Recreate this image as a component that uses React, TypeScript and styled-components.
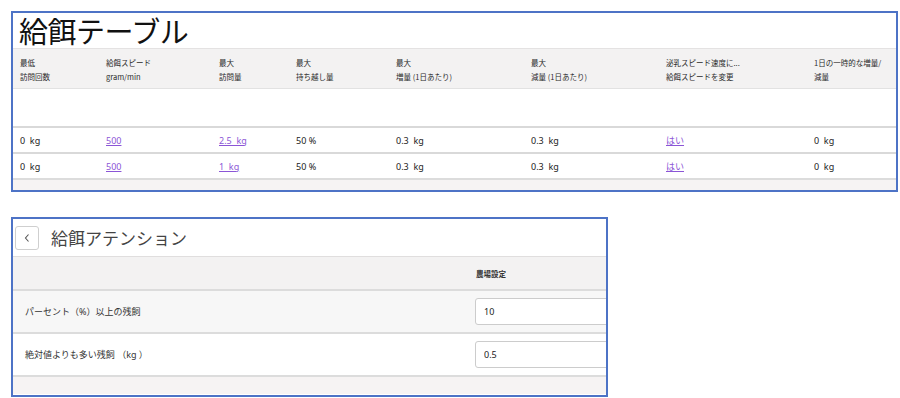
import styled, { createGlobalStyle } from 'styled-components';

const GlobalStyle = createGlobalStyle`
    html, body {
        margin: 0;
        padding: 0;
        background: #ffffff;
    }
    body {
        font-family: 'Noto Sans', 'Noto Sans CJK JP', sans-serif;
        color: #222;
    }
`;

const headers = [
    ['最低', '訪問回数'],
    ['給餌スピード', 'gram/min'],
    ['最大', '訪問量'],
    ['最大', '持ち越し量'],
    ['最大', '増量 (1日あたり)'],
    ['最大', '減量 (1日あたり)'],
    ['泌乳スピード速度に...', '給餌スピードを変更'],
    ['1日の一時的な増量/', '減量']
];

type Cell = { text: string; link?: boolean };

const rows: Cell[][] = [
    [
        { text: '0  kg' },
        { text: '500', link: true },
        { text: '2.5  kg', link: true },
        { text: '50 %' },
        { text: '0.3  kg' },
        { text: '0.3  kg' },
        { text: 'はい', link: true },
        { text: '0  kg' }
    ],
    [
        { text: '0  kg' },
        { text: '500', link: true },
        { text: '1  kg', link: true },
        { text: '50 %' },
        { text: '0.3  kg' },
        { text: '0.3  kg' },
        { text: 'はい', link: true },
        { text: '0  kg' }
    ]
];

const attention = [
    { label: 'パーセント（%）以上の残飼', value: '10', shaded: true },
    { label: '絶対値よりも多い残飼 （kg ）', value: '0.5', shaded: false }
];

const App = () => {
    return (
        <Page>
            <GlobalStyle />
            <TablePanel>
                <TitleArea>
                    <BigTitle>給餌テーブル</BigTitle>
                </TitleArea>
                <HeaderRow>
                    {headers.map(([a, b]) => (
                        <HeadCell key={a + b}>
                            <div>{a}</div>
                            <div>{b}</div>
                        </HeadCell>
                    ))}
                </HeaderRow>
                <EmptyBand />
                {rows.map((row, i) => (
                    <DataRow key={i}>
                        {row.map((cell, j) =>
                            cell.link ? (
                                <LinkCell key={j}>{cell.text}</LinkCell>
                            ) : (
                                <DataCell key={j}>{cell.text}</DataCell>
                            )
                        )}
                    </DataRow>
                ))}
                <Footer $h={10} />
            </TablePanel>

            <AttentionPanel>
                <TitleBar>
                    <BackButton aria-label="戻る">
                        <svg width="8" height="10" viewBox="0 0 8 10">
                            <path
                                d="M5.5 1.5 L2.5 5 L5.5 8.5"
                                fill="none"
                                stroke="#555"
                                strokeWidth="1.1"
                            />
                        </svg>
                    </BackButton>
                    <SubTitle>給餌アテンション</SubTitle>
                </TitleBar>
                <AttHeader>
                    <span />
                    <AttHeadText>農場設定</AttHeadText>
                </AttHeader>
                {attention.map(item => (
                    <AttRow key={item.label} $shaded={item.shaded}>
                        <AttLabel>{item.label}</AttLabel>
                        <ValueInput defaultValue={item.value} />
                    </AttRow>
                ))}
                <Footer $h={17} />
            </AttentionPanel>
        </Page>
    );
};

const Page = styled.div`
    padding: 11px 0 0 11px;
    display: flex;
    flex-direction: column;
    gap: 25px;
    align-items: flex-start;
`;

const Panel = styled.section`
    border: 2px solid #4d73c6;
    background: #fff;
    box-sizing: border-box;
`;

const TablePanel = styled(Panel)`
    width: 887px;
`;

const AttentionPanel = styled(Panel)`
    width: 597px;
    height: 180px;
    overflow: hidden;
`;

const TitleArea = styled.div`
    height: 35px;
    display: flex;
    align-items: center;
    padding-left: 6px;
`;

const BigTitle = styled.h1`
    margin: 0;
    font-family: 'Noto Sans CJK JP', sans-serif;
    font-weight: 400;
    font-size: 29px;
    line-height: 1;
    color: #111;
    letter-spacing: -0.5px;
`;

const columns = '86px 113px 77px 100px 135px 135px 148px 1fr';

const HeaderRow = styled.div`
    display: grid;
    grid-template-columns: ${columns};
    padding: 7px 0 0 7px;
    height: 40px;
    box-sizing: border-box;
    background: #f3f2f2;
    border-top: 1px solid #e4e2e2;
`;

const HeadCell = styled.div`
    font-family: 'Noto Sans CJK JP', sans-serif;
    font-size: 7.5px;
    line-height: 14px;
    color: #2a2a2a;
`;

const EmptyBand = styled.div`
    height: 37px;
    border-top: 1px solid #e2e2e2;
`;

const DataRow = styled.div`
    display: grid;
    grid-template-columns: ${columns};
    align-items: center;
    padding-left: 7px;
    height: 24px;
    border-top: 2px solid #d9d9d9;
`;

const DataCell = styled.span`
    font-size: 9px;
    color: #222;
    white-space: pre;
`;

const LinkCell = styled.a`
    font-size: 9px;
    color: #8b55d6;
    text-decoration: underline;
    white-space: pre;
    cursor: pointer;
    justify-self: start;
`;

const Footer = styled.div<{ $h: number }>`
    height: ${p => p.$h}px;
    background: #f6f3f3;
    border-top: 2px solid #dcdcdc;
`;

const TitleBar = styled.div`
    display: flex;
    align-items: center;
    gap: 12px;
    height: 37px;
    padding-left: 2px;
`;

const BackButton = styled.button`
    width: 24px;
    height: 24px;
    padding: 0;
    display: flex;
    align-items: center;
    justify-content: center;
    background: #fff;
    border: 1px solid #cfcfcf;
    border-radius: 3px;
`;

const SubTitle = styled.h2`
    margin: 0;
    font-family: 'Noto Sans CJK JP', sans-serif;
    font-weight: 400;
    font-size: 17px;
    color: #444;
`;

const attColumns = '450px 1fr';

const AttHeader = styled.div`
    display: grid;
    grid-template-columns: ${attColumns};
    align-items: center;
    height: 32px;
    padding-left: 12px;
    background: #f3f2f2;
    border-top: 1px solid #e0dede;
`;

const AttHeadText = styled.span`
    font-family: 'Noto Sans CJK JP', sans-serif;
    font-size: 7.5px;
    font-weight: 700;
    color: #333;
    padding-left: 1px;
`;

const AttRow = styled.div<{ $shaded: boolean }>`
    display: grid;
    grid-template-columns: ${attColumns};
    align-items: center;
    height: 41px;
    padding-left: 12px;
    background: ${p => (p.$shaded ? '#f7f7f7' : '#ffffff')};
    border-top: 2px solid #dcdcdc;
`;

const AttLabel = styled.span`
    font-family: 'Noto Sans', 'Noto Sans CJK JP', sans-serif;
    font-size: 9px;
    color: #333;
`;

const ValueInput = styled.input`
    width: 160px;
    height: 27px;
    box-sizing: border-box;
    border: 1px solid #cccccc;
    border-radius: 3px;
    background: #fff;
    padding: 0 8px;
    font-family: 'Noto Sans', sans-serif;
    font-size: 9px;
    color: #222;
    outline: none;
`;

export default App;
